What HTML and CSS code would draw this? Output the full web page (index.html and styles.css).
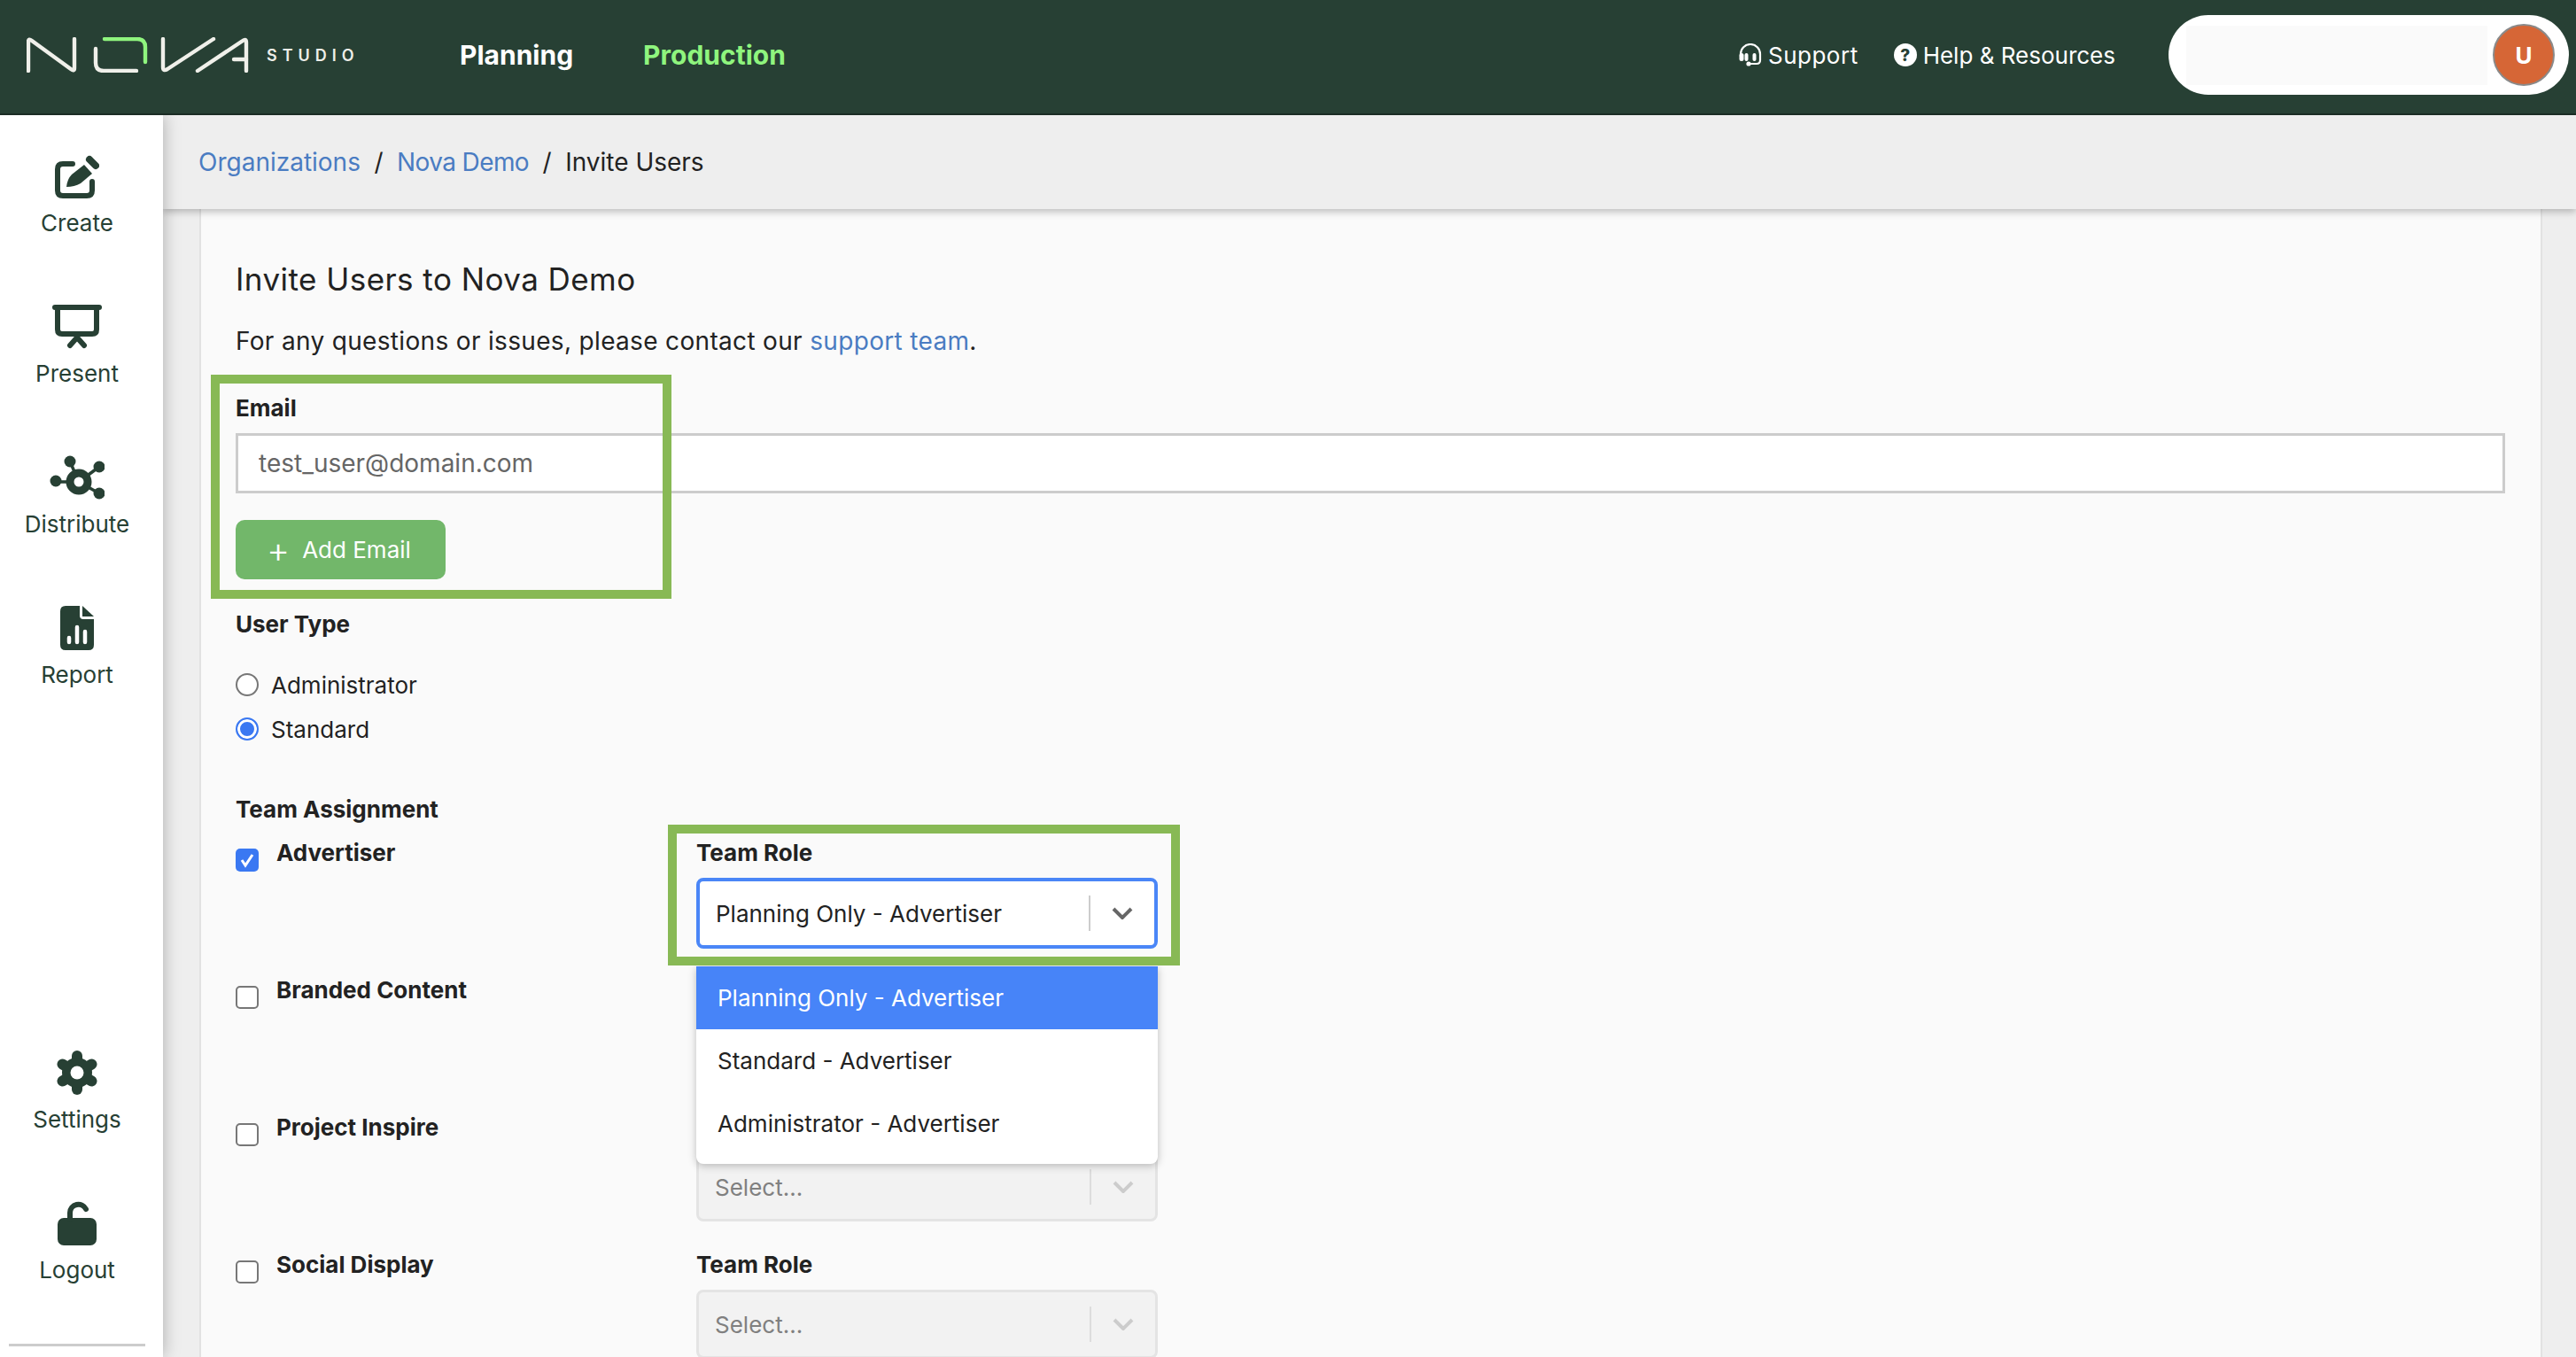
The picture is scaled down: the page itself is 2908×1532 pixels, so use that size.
FILE: index.html
```html
<!DOCTYPE html>
<html lang="en">
<head>
    <meta charset="UTF-8">
    <meta name="viewport" content="width=device-width, initial-scale=1.0">
    <title>Invite Users</title>
    <link rel="stylesheet" href="styles.css">
</head>
<body>
    <!-- Top bar -->
    <header class="topbar">
        <a class="logo" href="#">
            <svg class="logo-mark" viewBox="10 13 252 40" fill="none" stroke-width="4.4" stroke-linecap="round" stroke-linejoin="round">
                <g stroke="#f0f0ea">
                    <path d="M12 51V18Q12 14 16 17L60 49Q64 52 64 48V15"/>
                    <path d="M134 51H97Q88 51 88 42V26"/>
                    <path d="M164 15V47Q164 52 169 49L221 15"/>
                    <path d="M203 51L254 17Q258 14 258 19V51"/>
                    <path d="M244 38H258"/>
                </g>
                <path stroke="#8ff57e" d="M98 15H135Q144 15 144 24V41"/>
            </svg>
            <span class="logo-sub">STUDIO</span>
        </a>
        <nav class="mainnav">
            <a href="#">Planning</a>
            <a href="#" class="active">Production</a>
        </nav>
        <div class="toplinks">
            <a href="#" class="support-link">
                <svg class="top-icon" viewBox="0 0 26 26" fill="none" stroke="#fff">
                    <path stroke-width="2.2" d="M2 15V12A11 11 0 0 1 24 12V19Q24 23 20 23H11"/>
                    <rect x="0.5" y="11" width="5" height="9" rx="2.5" fill="#fff" stroke="none"/>
                    <rect x="6.5" y="11" width="4" height="9" rx="2" fill="#fff" stroke="none"/>
                    <rect x="15.5" y="11" width="4" height="9" rx="2" fill="#fff" stroke="none"/>
                    <circle cx="11" cy="23" r="2.6" fill="#fff" stroke="none"/>
                </svg>
                Support
            </a>
            <a href="#"><span class="help-dot">?</span>Help &amp; Resources</a>
        </div>
        <div class="userpill">
            <div class="userpill-name"></div>
            <div class="avatar">U</div>
        </div>
    </header>

    <div class="layout">
        <!-- Left menu -->
        <aside class="sidebar">
            <div class="side-group">
                <a class="side-item" href="#">
                    <svg class="side-icon" viewBox="0 0 50 50">
                        <path d="M20 11H9Q3 11 3 17V41Q3 47 9 47H36Q42 47 42 41V31" fill="none" stroke="#274034" stroke-width="6" stroke-linecap="round"/>
                        <path d="M13 37Q14 28 19 23L33 12L42 22L29 33Q22 37 13 37Z" fill="#274034"/>
                        <path d="M39 6L46 13" fill="none" stroke="#274034" stroke-width="8" stroke-linecap="round"/>
                    </svg>
                    <span>Create</span>
                </a>
                <a class="side-item" href="#">
                    <svg class="side-icon" viewBox="0 0 56 50" fill="none" stroke="#274034" stroke-linecap="round">
                        <path d="M3 3H53" stroke-width="6"/>
                        <path d="M6 3V28Q6 33 11 33H45Q50 33 50 28V3" stroke-width="6"/>
                        <path d="M28 34V37M28 37L20 46M28 37L36 46" stroke-width="6"/>
                    </svg>
                    <span>Present</span>
                </a>
                <a class="side-item" href="#">
                    <svg class="side-icon" viewBox="55 514 62 50" fill="#274034">
                        <path d="M88 544L78 521M88 544L111 527M88 544L111 557M88 544H62" stroke="#274034" stroke-width="3.5"/>
                        <circle cx="78" cy="521" r="6.500"/>
                        <circle cx="111" cy="527" r="6.500"/>
                        <circle cx="111" cy="557" r="6.500"/>
                        <circle cx="62" cy="543" r="6.500"/>
                        <circle cx="88" cy="544" r="10" fill="#fff" stroke="#274034" stroke-width="9"/>
                    </svg>
                    <span>Distribute</span>
                </a>
                <a class="side-item" href="#">
                    <svg class="side-icon" viewBox="0 0 38 50">
                        <path d="M6 0H22V11Q22 15 26 15H38V44Q38 50 32 50H6Q0 50 0 44V6Q0 0 6 0Z" fill="#274034"/>
                        <path d="M25 0L38 12H25Z" fill="#274034"/>
                        <path d="M10 36V41M19 24V41M28 29V41" stroke="#fff" stroke-width="4.5" stroke-linecap="round"/>
                    </svg>
                    <span>Report</span>
                </a>
            </div>
            <div class="side-group">
                <a class="side-item" href="#">
                    <svg class="side-icon" viewBox="0 0 48 50" stroke="#274034" stroke-width="12" stroke-linecap="round">
                        <path d="M24 6V44"/>
                        <path d="M7.500 15.500L40.500 34.500"/>
                        <path d="M7.500 34.500L40.500 15.500"/>
                        <circle cx="24" cy="25" r="17" fill="#274034" stroke="none"/>
                        <circle cx="24" cy="25" r="7.500" fill="#fff" stroke="none"/>
                    </svg>
                    <span>Settings</span>
                </a>
                <a class="side-item" href="#">
                    <svg class="side-icon" viewBox="0 0 44 50">
                        <rect x="0" y="19" width="44" height="31" rx="7" fill="#274034"/>
                        <path d="M14 21V13A9.500 9.500 0 0 1 32 9" fill="none" stroke="#274034" stroke-width="6" stroke-linecap="round"/>
                    </svg>
                    <span>Logout</span>
                </a>
                <hr class="side-rule">
            </div>
        </aside>

        <div class="content">
            <div class="breadcrumb">
                <a href="#">Organizations</a>
                <span class="crumb-sep">/</span>
                <a href="#" class="crumb-org">Nova Demo</a>
                <span class="crumb-sep">/</span>
                <span>Invite Users</span>
            </div>

            <main class="card">
                <h1>Invite Users to Nova Demo</h1>
                <p class="intro">For any questions or issues, please contact our <a href="#">support team</a>.</p>

                <!-- Email -->
                <section class="email-block">
                    <div class="callout callout-email"></div>
                    <label class="field-label">Email</label>
                    <input class="text-input" type="text" value="test_user@domain.com">
                    <button class="add-btn" type="button"><span class="plus">+</span>Add Email</button>
                </section>

                <!-- User type -->
                <label class="field-label type-label">User Type</label>
                <label class="radio-row"><span class="radio"></span>Administrator</label>
                <label class="radio-row"><span class="radio on"></span>Standard</label>

                <!-- Teams -->
                <label class="field-label team-label">Team Assignment</label>
                <div class="team-list">
                    <div class="team-row">
                        <div class="team-name">
                            <span class="check on">
                                <svg viewBox="0 0 26 26" fill="none" stroke="#fff" stroke-width="3"><path d="M7 13L11 19L19 7"/></svg>
                            </span>
                            Advertiser
                        </div>
                        <div class="team-role">
                            <div class="callout callout-role"></div>
                            <label class="field-label">Team Role</label>
                            <div class="select focus">
                                <span class="select-value">Planning Only - Advertiser</span>
                                <span class="select-arrow">
                                    <svg viewBox="0 0 24 14" fill="none" stroke="#666" stroke-width="4"><path d="M2 2L12 12L22 2"/></svg>
                                </span>
                            </div>
                            <ul class="menu">
                                <li class="picked">Planning Only - Advertiser</li>
                                <li>Standard - Advertiser</li>
                                <li>Administrator - Advertiser</li>
                            </ul>
                        </div>
                    </div>
                    <div class="team-row">
                        <div class="team-name"><span class="check"></span>Branded Content</div>
                        <div class="team-role"></div>
                    </div>
                    <div class="team-row">
                        <div class="team-name"><span class="check"></span>Project Inspire</div>
                        <div class="team-role">
                            <div class="role-spacer"></div>
                            <div class="select off">
                                <span class="select-value">Select...</span>
                                <span class="select-arrow">
                                    <svg viewBox="0 0 24 14" fill="none" stroke="#ccc" stroke-width="4"><path d="M2 2L12 12L22 2"/></svg>
                                </span>
                            </div>
                        </div>
                    </div>
                    <div class="team-row">
                        <div class="team-name"><span class="check"></span>Social Display</div>
                        <div class="team-role">
                            <label class="field-label">Team Role</label>
                            <div class="select off">
                                <span class="select-value">Select...</span>
                                <span class="select-arrow">
                                    <svg viewBox="0 0 24 14" fill="none" stroke="#ccc" stroke-width="4"><path d="M2 2L12 12L22 2"/></svg>
                                </span>
                            </div>
                        </div>
                    </div>
                </div>
            </main>
        </div>
    </div>
</body>
</html>
```

FILE: styles.css
```css
/* Reset styles */
* {
    margin: 0;
    padding: 0;
    box-sizing: border-box;
}

html, body {
    height: 100%;
    overflow: hidden;
}

body {
    display: flex;
    flex-direction: column;
    font-family: Inter, "Noto Sans", sans-serif;
    font-size: 26px;
    color: #222;
    background-color: #eee;
}

a {
    text-decoration: none;
    color: inherit;
}

/* Top bar */
.topbar {
    flex: none;
    display: flex;
    align-items: center;
    height: 130px;
    padding: 0 8px 4px 30px;
    background-color: #274034;
    border-bottom: 2px solid #1b2c24;
    color: #fff;
    position: relative;
    z-index: 3;
}

.logo {
    display: flex;
    align-items: center;
    gap: 19px;
    width: 489px;
}

.logo-mark {
    width: 252px;
    height: 40px;
}

.logo-sub {
    font-size: 18px;
    font-weight: 600;
    letter-spacing: 6px;
    color: #eeeee8;
}

.mainnav {
    display: flex;
    gap: 79px;
    font-size: 30px;
    font-weight: 700;
}

.mainnav .active {
    color: #8ff57e;
}

.toplinks {
    display: flex;
    align-items: center;
    gap: 40px;
    margin-left: auto;
    margin-right: 60px;
    font-size: 26px;
}

.toplinks a {
    display: flex;
    align-items: center;
    gap: 7px;
}

.support-link {
    letter-spacing: 0.5px;
}

.top-icon {
    width: 26px;
    height: 26px;
}

.help-dot {
    display: flex;
    align-items: center;
    justify-content: center;
    width: 26px;
    height: 26px;
    border-radius: 50%;
    background-color: #fff;
    color: #274034;
    font-size: 19px;
    font-weight: 800;
}

.userpill {
    display: flex;
    align-items: center;
    gap: 6px;
    width: 452px;
    height: 90px;
    padding: 0 16px 0 20px;
    background-color: #fff;
    border-radius: 45px;
}

.userpill-name {
    width: 340px;
    height: 67px;
    background-color: #fafafa;
}

.avatar {
    display: flex;
    align-items: center;
    justify-content: center;
    width: 70px;
    height: 70px;
    border-radius: 50%;
    border: 2px solid #8a8a8a;
    background-color: #d66636;
    color: #fff;
    font-size: 26px;
    font-weight: 700;
}

/* Page below the top bar */
.layout {
    flex: 1;
    display: flex;
    min-height: 0;
}

.sidebar {
    flex: none;
    display: flex;
    flex-direction: column;
    justify-content: space-between;
    width: 184px;
    padding: 44px 10px 12px 0;
    background-color: #fff;
    box-shadow: 0 0 18px rgba(0, 0, 0, 0.28);
    position: relative;
    z-index: 2;
}

.side-group {
    display: flex;
    flex-direction: column;
    gap: 50px;
}

.side-item {
    display: flex;
    flex-direction: column;
    align-items: center;
    height: 120px;
    color: #274034;
    font-size: 26px;
}

.side-icon {
    height: 50px;
    margin-bottom: 12px;
}

.side-rule {
    height: 3px;
    margin: -9px 10px 0 10px;
    border: none;
    background-color: #ccc;
}

.content {
    flex: 1;
    min-width: 0;
}

.breadcrumb {
    display: flex;
    align-items: center;
    gap: 15.5px;
    height: 106px;
    padding-left: 40px;
    background-color: #eee;
    box-shadow: 0 3px 8px rgba(0, 0, 0, 0.25);
    position: relative;
    z-index: 1;
    font-size: 28px;
}

.breadcrumb a {
    color: #4a7cc2;
}

.breadcrumb .crumb-org {
    letter-spacing: -0.6px;
}

/* Form card */
.card {
    width: 2645px;
    height: 1400px;
    margin-left: 41px;
    padding: 56px 40px 0 39px;
    background-color: #fafafa;
    border-left: 2px solid #e2e2e2;
    border-right: 2px solid #e2e2e2;
}

h1 {
    font-size: 35px;
    font-weight: 400;
    letter-spacing: 0.45px;
    line-height: 46px;
}

.intro {
    margin-top: 30px;
    font-size: 28px;
    letter-spacing: 0.33px;
    line-height: 34px;
}

.intro a {
    color: #4a7cc2;
}

.field-label {
    display: block;
    font-size: 26px;
    font-weight: 700;
    line-height: 32px;
    color: #222;
}

.email-block {
    position: relative;
    margin-top: 43px;
}

/* Green annotation frames */
.callout {
    position: absolute;
    border: 10px solid #88b955;
    pointer-events: none;
    z-index: 4;
}

.callout-email {
    left: -28px;
    top: -22px;
    width: 520px;
    height: 253px;
}

.callout-role {
    left: -32px;
    top: -16px;
    width: 578px;
    height: 159px;
}

.text-input {
    display: block;
    width: 100%;
    height: 68px;
    margin-top: 12px;
    padding: 0 23px;
    border: 3px solid #ccc;
    background-color: #fff;
    font-family: inherit;
    font-size: 28px;
    color: #666;
}

.add-btn {
    display: flex;
    align-items: center;
    width: 237px;
    height: 67px;
    margin-top: 30px;
    padding-left: 35px;
    border: none;
    border-radius: 10px;
    background-color: #72b76a;
    color: #fff;
    font-family: inherit;
    font-size: 26px;
}

.plus {
    margin-right: 14px;
    font-size: 40px;
    font-weight: 300;
    line-height: 1;
}

.type-label {
    margin-top: 35px;
}

.radio-row {
    display: flex;
    align-items: center;
    gap: 14px;
    height: 50px;
    font-size: 26px;
}

.type-label + .radio-row {
    margin-top: 27px;
}

.radio {
    width: 26px;
    height: 26px;
    border: 2px solid #777;
    border-radius: 50%;
    background-color: #fff;
}

.radio.on {
    border-color: #3a78f2;
    background-color: #3a78f2;
    box-shadow: inset 0 0 0 3px #fff;
}

.team-label {
    margin-top: 50px;
}

.team-list {
    margin-top: 17px;
}

.team-row {
    display: grid;
    grid-template-columns: 520px 521px;
    height: 155px;
}

.team-name {
    display: flex;
    align-items: flex-start;
    gap: 20px;
    font-size: 26px;
    font-weight: 700;
    line-height: 32px;
}

.check {
    flex: none;
    width: 26px;
    height: 26px;
    margin-top: 11px;
    border: 2px solid #777;
    border-radius: 5px;
    background-color: #fff;
}

.check.on {
    border: none;
    background-color: #3a78f2;
}

.check svg {
    display: block;
}

.team-role {
    position: relative;
}

.role-spacer {
    height: 32px;
}

.select {
    display: flex;
    align-items: center;
    height: 80px;
    margin-top: 12px;
    padding-left: 18px;
    border: 3px solid #e4e4e4;
    border-radius: 8px;
    font-size: 26px;
}

.select.focus {
    border: 4px solid #4a86f7;
    background-color: #fff;
}

.select.off {
    height: 78px;
    background-color: #f2f2f2;
    color: #808080;
}

.select-value {
    flex: 1;
}

.select-arrow {
    display: flex;
    align-items: center;
    justify-content: center;
    width: 74px;
    height: 40px;
    border-left: 2px solid #ccc;
}

.select.off .select-arrow {
    border-left-color: #ddd;
}

.select-arrow svg {
    width: 24px;
    height: 14px;
}

.menu {
    position: absolute;
    left: 0;
    top: 144px;
    width: 521px;
    height: 223px;
    list-style: none;
    background-color: #fff;
    border-radius: 0 0 8px 8px;
    box-shadow: 0 2px 10px rgba(0, 0, 0, 0.25);
    z-index: 3;
    font-size: 26px;
}

.menu li {
    display: flex;
    align-items: center;
    height: 71px;
    padding-left: 24px;
}

.menu .picked {
    background-color: #4784f8;
    color: #fff;
}
```
